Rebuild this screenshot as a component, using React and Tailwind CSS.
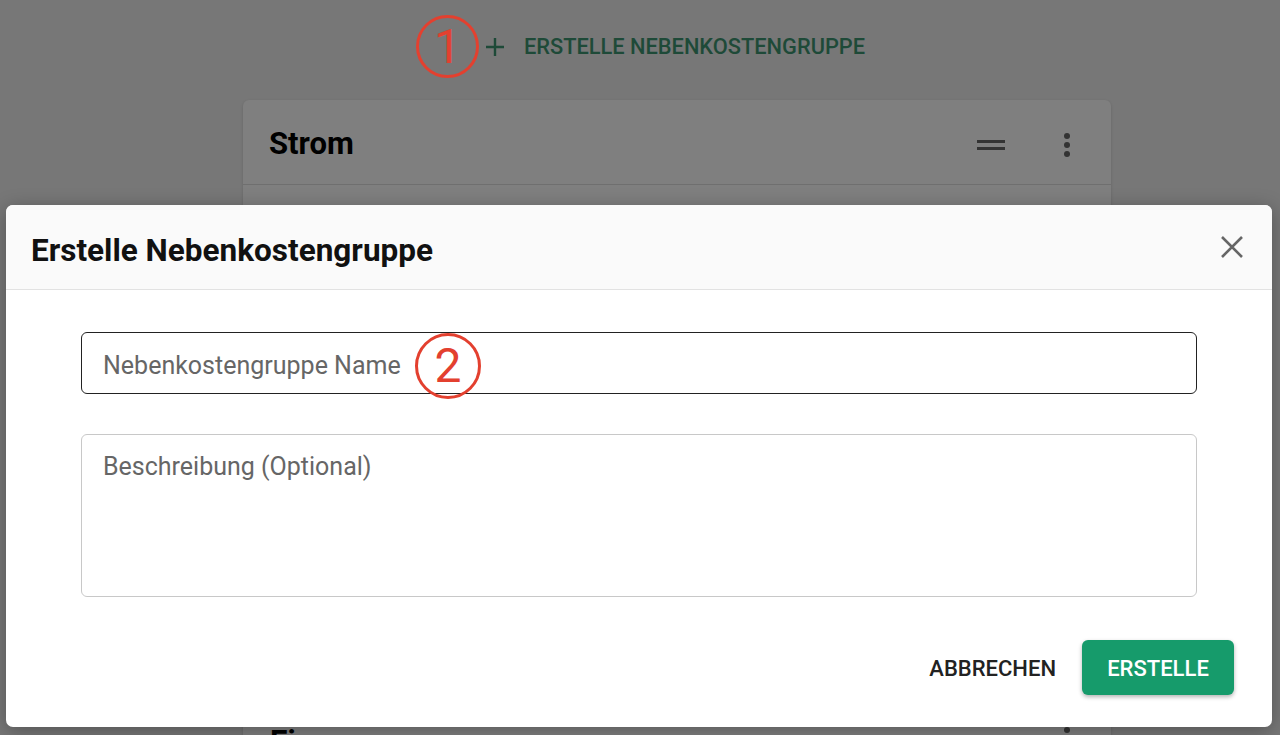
import React from "react";

function Kebab() {
  return (
    <svg width="8" height="26" viewBox="0 0 8 26">
      <circle cx="4" cy="4" r="3" fill="#333" />
      <circle cx="4" cy="13" r="3" fill="#333" />
      <circle cx="4" cy="22" r="3" fill="#333" />
    </svg>
  );
}

function Handle() {
  return (
    <svg width="28" height="12" viewBox="0 0 28 12">
      <rect x="0" y="1" width="28" height="3" fill="#333" />
      <rect x="0" y="8" width="28" height="3" fill="#333" />
    </svg>
  );
}

function Marker({ n, className }) {
  return (
    <div
      className={
        "absolute flex items-center justify-center rounded-full border-[3px] border-[#e3402f] font-normal text-[#e3402f] " +
        className
      }
      style={{ fontFamily: "Roboto, sans-serif" }}
    >
      {n}
    </div>
  );
}

export default function App() {
  return (
    <div
      className="relative h-[735px] w-[1280px] overflow-hidden bg-[#777777]"
      style={{ fontFamily: "Roboto, 'Liberation Sans', sans-serif" }}
    >
      {/* background page */}
      <div className="flex flex-col items-center pl-[74px]">
        <div className="relative mt-[29px] flex h-[36px] items-center pr-[4px]">
          <svg width="20" height="20" viewBox="0 0 20 20" className="mr-[19px]">
            <path d="M10 1v18M1 10h18" stroke="#1e4a38" strokeWidth="2.4" />
          </svg>
          <span className="text-[21.8px] font-medium text-[#1e4a38]">
            ERSTELLE NEBENKOSTENGRUPPE
          </span>
        </div>
        <div className="mt-[35px] w-[868px] rounded-t-[6px] bg-[#7f7f7f] shadow-[0_1px_3px_rgba(0,0,0,0.15)]">
          <div className="flex h-[85px] items-center border-b border-[#6f6f6f] pl-[26px] pr-[40px] pt-[5px]">
            <span className="flex-1 text-[31px] font-bold text-black">Strom</span>
            <Handle />
            <div className="ml-[58px]">
              <Kebab />
            </div>
          </div>
          <div className="h-[541px]" />
          <div className="flex h-[40px] items-start pl-[27px] pr-[40px]">
            <span className="flex-1 text-[31px] font-bold leading-none text-black">Ein</span>
            <Kebab />
          </div>
        </div>
      </div>
      <Marker n="1" className="left-[416px] top-[15px] h-[63px] w-[63px] text-[48px] leading-none" />

      {/* modal */}
      <div className="absolute left-[6px] top-[205px] w-[1266px] overflow-hidden rounded-[7px] bg-white shadow-[0_4px_20px_rgba(0,0,0,0.3)]">
        <div className="flex h-[85px] items-center justify-between border-b border-[#e2e2e2] bg-[#fafafa] pl-[25px] pr-[28px]">
          <span className="pt-[7px] text-[31.5px] font-bold text-[#111]">Erstelle Nebenkostengruppe</span>
          <svg width="24" height="24" viewBox="0 0 24 24">
            <path d="M2 2L22 22M22 2L2 22" stroke="#666" strokeWidth="2.6" />
          </svg>
        </div>
        <div className="px-[75px] pt-[42px]">
          <div className="flex h-[62px] items-center rounded-[6px] border-[1.5px] border-[#222] px-[21px] pt-[5px]">
            <span className="text-[25px] text-[#666]">Nebenkostengruppe Name</span>
          </div>
          <div className="mt-[40px] h-[163px] rounded-[6px] border-[1.5px] border-[#c8c8c8] px-[21px] pt-[13px]">
            <span className="text-[25px] text-[#666]">Beschreibung (Optional)</span>
          </div>
        </div>
        <div className="flex items-center justify-end gap-[26px] pr-[38px] pt-[43px] pb-[32px]">
          <span className="pt-[2px] text-[22px] font-medium text-[#222]">ABBRECHEN</span>
          <div className="flex h-[55px] w-[152px] items-center justify-center rounded-[6px] bg-[#169b6b] pt-[2px] shadow-[0_2px_4px_rgba(0,0,0,0.3)]">
            <span className="text-[22px] font-medium text-white">ERSTELLE</span>
          </div>
        </div>
      </div>
      <Marker n="2" className="left-[415px] top-[333px] h-[66px] w-[66px] text-[48px] leading-none" />
    </div>
  );
}
